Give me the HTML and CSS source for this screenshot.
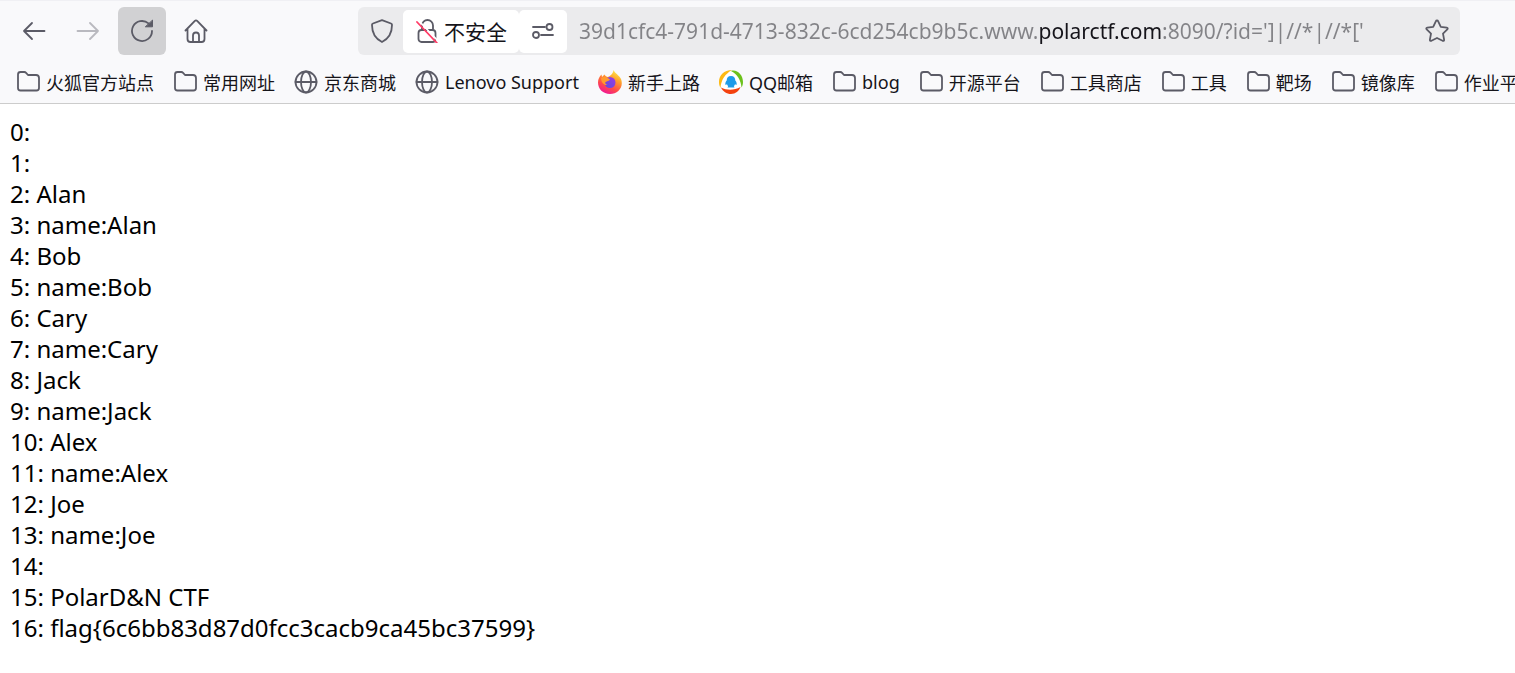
FILE: index.html
```html
<!DOCTYPE html>
<html lang="zh-CN">
<head>
<meta charset="UTF-8">
<meta name="viewport" content="width=device-width, initial-scale=1.0">
<title>polarctf.com</title>
<link rel="stylesheet" href="styles.css">
</head>
<body>
<svg class="sprite" aria-hidden="true">
<symbol id="folder" viewBox="0 0 24 24">
<path d="M2 18V4.500a2.500 2.500 0 0 1 2.500-2.500h3.800a2.500 2.500 0 0 1 1.800.8L12 5h8a3 3 0 0 1 3 3v10a2.500 2.500 0 0 1-2.500 2.500h-16A2.500 2.500 0 0 1 2 18z"/>
</symbol>
<symbol id="globe" viewBox="0 0 24 24">
<circle cx="12" cy="12" r="10.500"/>
<ellipse cx="12" cy="12" rx="5" ry="10.500"/>
<path d="M1.500 12h21"/>
</symbol>
</svg>

<header class="browser">
<div class="toolbar">
<div class="nav">
<button class="nav-btn" aria-label="后退">
<svg class="icon" viewBox="0 0 24 24"><path d="M22.500 12H2M10 4l-8 8 8 8"/></svg>
</button>
<button class="nav-btn" aria-label="前进" disabled>
<svg class="icon" viewBox="0 0 24 24"><path d="M1.500 12H22M14 4l8 8-8 8"/></svg>
</button>
<button class="nav-btn active" aria-label="刷新">
<svg class="icon" viewBox="0 0 24 24"><path d="M22 12a10 10 0 1 1-3.500-7.600"/><path class="solid" d="M22.500 1.500v6.300h-6.800z"/></svg>
</button>
<button class="nav-btn" aria-label="主页">
<svg class="icon" viewBox="0 0 24 24"><path d="M1.500 11.500L10.600 2.100a2 2 0 0 1 2.800 0l9.100 9.400M3.500 10v10a3 3 0 0 0 3 3h11a3 3 0 0 0 3-3V10M9 23v-6.500a3 3 0 0 1 6 0V23"/></svg>
</button>
</div>
<div class="urlbar">
<button class="shield" aria-label="跟踪保护">
<svg class="icon" viewBox="0 0 24 24"><path d="M12 1.200L21 4.500a1.500 1.500 0 0 1 1 1.500c0 7-3 13.500-10 17C5 19.500 2 13 2 6a1.500 1.500 0 0 1 1-1.500z"/></svg>
</button>
<button class="identity">
<svg class="icon" viewBox="0 0 24 24"><path d="M7 10V6.500a5.500 5.500 0 0 1 11 0V10"/><rect x="3.500" y="11" width="17" height="12" rx="3"/><path class="gap" d="M4 2l20 21"/><path class="slash" d="M2 3l20 21"/></svg>
<span>不安全</span>
</button>
<button class="permissions" aria-label="权限">
<svg class="icon" viewBox="0 0 24 24"><path d="M2 8h12M10 16h12"/><circle cx="18.500" cy="8" r="3"/><circle cx="5" cy="16" r="3"/></svg>
</button>
<input class="url" type="text" aria-label="网址" spellcheck="false" value="39d1cfc4-791d-4713-832c-6cd254cb9b5c.www.polarctf.com:8090/?id=']|//*|//*['">
<button class="star" aria-label="添加书签">
<svg class="icon" viewBox="0 0 24 24"><path d="M12 1.500q.8 0 1.200.9l2.600 5.500 5.900.8q1.700.4.600 1.700L18 14.600l1.100 6.100q.1 1.700-1.500 1.100L12 19l-5.600 2.800q-1.600.6-1.500-1.100L6 14.600l-4.300-4.200q-1.100-1.300.6-1.700l5.900-.8 2.600-5.500q.4-.9 1.200-.9z"/></svg>
</button>
</div>
</div>

<nav class="bookmarks">
<a href="#"><svg class="icon"><use href="#folder"/></svg>火狐官方站点</a>
<a href="#"><svg class="icon"><use href="#folder"/></svg>常用网址</a>
<a href="#"><svg class="icon"><use href="#globe"/></svg>京东商城</a>
<a href="#"><svg class="icon"><use href="#globe"/></svg>Lenovo Support</a>
<a href="#"><svg class="logo" viewBox="0 0 24 24">
<defs>
<linearGradient id="fire" x1=".8" y1="0" x2=".3" y2="1"><stop offset="0" stop-color="#fff44f"/><stop offset=".35" stop-color="#ffa02a"/><stop offset=".7" stop-color="#ff4a4a"/><stop offset="1" stop-color="#f0149a"/></linearGradient>
<linearGradient id="core" x1="0" y1="1" x2="1" y2="0"><stop offset="0" stop-color="#5b4be0"/><stop offset="1" stop-color="#a03be0"/></linearGradient>
</defs>
<path fill="url(#fire)" d="M15.500 0c1 3 6 5.500 7.500 9 3 8-3 15-11 15C5 24 0 19 0 12.500 0 9 1.500 6.500 3.500 4.500L4 7l2.500-2.500C7 5.800 8 6.500 9.500 7c2.500-.5 5.500-3 6-7z"/>
<circle cx="12" cy="12.500" r="5.500" fill="url(#core)"/>
<path fill="#ff9a2e" d="M3 8c3-2 6-1 9 1.500-1 1.800-3 1.500-4.500 2.500-.8 1 .3 2.600 2 3-3.500.8-6.500-3-6.500-7z"/>
</svg>新手上路</a>
<a href="#"><svg class="logo" viewBox="0 0 24 24">
<circle cx="12" cy="12" r="11" fill="#fff"/>
<path fill="#fdb913" d="M13 0C5 0 0 5 0 12c0 2.500.5 4 1.500 6C2 10 6 4 13 0z"/>
<path fill="#6cc11b" d="M12 1c6-2 12 4 12 11 0 2-.5 4-1.500 5.500C22 10 18 4 12 1z"/>
<path fill="#f4420f" d="M2 17.500c6 3 13 3 19.500-.5C20 21 16.500 24 12 24c-4.500 0-8-2.500-10-6.500z"/>
<path fill="#1e9be9" d="M12 6c3 0 4.300 2 4.300 4.600 1.200 1.400 1.700 3 1.200 4.400l-1.500-.8c-.4 1-.7 1.500-1.200 1.800l.7 1.500H8.500l.7-1.500c-.5-.3-.8-.8-1.200-1.800l-1.500.8c-.5-1.400 0-3 1.200-4.400C7.700 8 9 6 12 6z"/>
</svg>QQ邮箱</a>
<a href="#"><svg class="icon"><use href="#folder"/></svg>blog</a>
<a href="#"><svg class="icon"><use href="#folder"/></svg>开源平台</a>
<a href="#"><svg class="icon"><use href="#folder"/></svg>工具商店</a>
<a href="#"><svg class="icon"><use href="#folder"/></svg>工具</a>
<a href="#"><svg class="icon"><use href="#folder"/></svg>靶场</a>
<a href="#"><svg class="icon"><use href="#folder"/></svg>镜像库</a>
<a href="#"><svg class="icon"><use href="#folder"/></svg>作业平台</a>
</nav>
</header>

<main class="result">
0: <br>
1: <br>
2: Alan<br>
3: name:Alan<br>
4: Bob<br>
5: name:Bob<br>
6: Cary<br>
7: name:Cary<br>
8: Jack<br>
9: name:Jack<br>
10: Alex<br>
11: name:Alex<br>
12: Joe<br>
13: name:Joe<br>
14: <br>
15: PolarD&amp;N CTF<br>
16: flag{6c6bb83d87d0fcc3cacb9ca45bc37599}
</main>
</body>
</html>
```
FILE: styles.css
```css
body {
margin: 0;
background: #fff;
color: #000;
font-family: "Noto Sans", "Noto Sans CJK SC", sans-serif;
overflow-x: hidden;
}
button {
display: flex;
align-items: center;
justify-content: center;
padding: 0;
border: none;
background: none;
color: inherit;
font: inherit;
}
.sprite {
display: none;
}
.icon, .logo {
flex: none;
width: 24px;
height: 24px;
}
.icon {
fill: none;
stroke: #5b5b66;
stroke-width: 1.8;
stroke-linecap: round;
stroke-linejoin: round;
}
.icon .solid {
fill: #5b5b66;
stroke-width: 1;
}
.icon .gap {
stroke: #fff;
}
.icon .slash {
stroke: #ff3b66;
}
.browser {
background: #f9f9fb;
border-top: 1px solid #f0f0f4;
border-bottom: 1px solid #ccc;
}
.toolbar {
display: flex;
justify-content: space-between;
padding: 6px 55px 6px 10px;
}
.nav {
display: flex;
gap: 6px;
}
.nav-btn {
width: 48px;
height: 48px;
border-radius: 6px;
}
.nav-btn:disabled {
opacity: 0.4;
}
.nav-btn.active {
background: #d1d1d3;
}
.urlbar {
display: flex;
align-items: center;
flex: 1;
margin-left: 138px;
border-radius: 6px;
background: #ebebed;
font-size: 21px;
}
.shield {
width: 45px;
padding-left: 2px;
}
.identity, .permissions {
height: 43px;
border-radius: 5px;
background: #fff;
}
.identity {
gap: 5px;
width: 116px;
color: #15141a;
}
.permissions {
width: 48px;
}
/* the registered domain is darker than the rest of the address */
.url {
flex: 1;
min-width: 0;
height: 43px;
margin-left: 12px;
padding: 0;
border: none;
outline: none;
background: linear-gradient(90deg, #838387 460px, #15141a 460px, #15141a 584px, #838387 584px);
-webkit-background-clip: text;
background-clip: text;
color: transparent;
caret-color: #15141a;
font: inherit;
}
.star {
width: 46px;
height: 48px;
}
.bookmarks {
display: flex;
align-items: center;
gap: 19px;
height: 42px;
padding-left: 16px;
overflow: hidden;
}
.bookmarks a {
display: flex;
align-items: center;
gap: 6px;
flex: none;
color: #15141a;
font-size: 18px;
text-decoration: none;
white-space: nowrap;
}
.result {
padding: 12px 10px;
font-size: 24px;
line-height: 31px;
}
```
